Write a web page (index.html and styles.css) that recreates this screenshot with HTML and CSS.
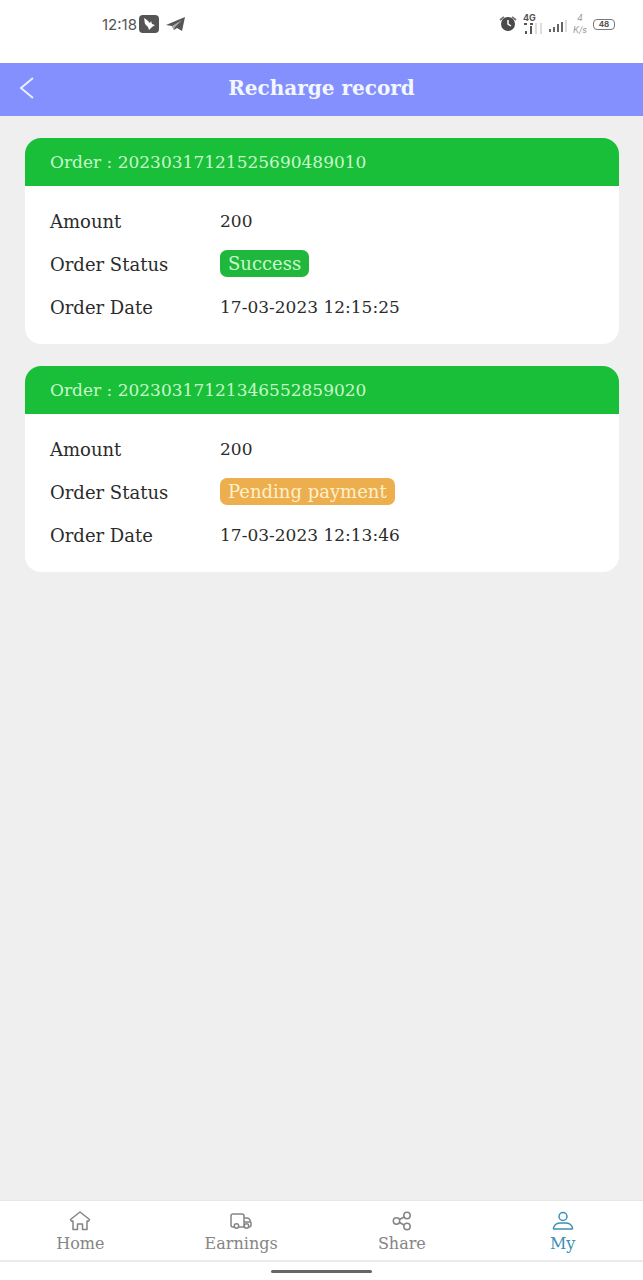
FILE: index.html
```html
<!DOCTYPE html>
<html lang="en">
<head>
    <meta charset="UTF-8">
    <meta name="viewport" content="width=device-width, initial-scale=1.0">
    <title>Recharge record</title>
    <link rel="stylesheet" href="styles.css">
</head>
<body>
    <!-- Phone status bar -->
    <div class="status-bar">
        <div class="status-left">
            <span class="clock">12:18</span>
            <svg width="20" height="18" viewBox="0 0 20 18">
                <rect width="20" height="18" rx="4" fill="#555"/>
                <path d="M5 3 L8 5 L11 8 L12 6 L13 9 L16 10 L13 12 L10 15 L9 12 L6 9 Z" fill="#fff"/>
            </svg>
            <svg width="20" height="16" viewBox="0 0 20 16">
                <path d="M0 9 L19 1 L16 15 L11 12 L8 14 L6 10 Z" fill="#555"/>
                <path d="M6 10 L16 4 L9 11 L8 14" fill="#aaa"/>
            </svg>
        </div>
        <div class="status-right">
            <svg width="18" height="16" viewBox="0 0 18 16">
                <circle cx="9" cy="8" r="7" fill="#4a4a4a"/>
                <path d="M1 4 L5 1 M17 4 L13 1" stroke="#777" stroke-width="2"/>
                <path d="M9 4 V8 L12 10" stroke="#fff" stroke-width="1.5" fill="none"/>
            </svg>
            <div class="network">
                <span>4G</span>
                <svg width="20" height="11" viewBox="0 0 20 11">
                    <path d="M1 1 H4 M7 1 H10 M3 8 V11 M8 3 V11" stroke="#555" stroke-width="2"/>
                    <path d="M13 0 V11 M18 0 V11" stroke="#ddd" stroke-width="2"/>
                </svg>
            </div>
            <svg class="signal" width="18" height="12" viewBox="0 0 18 12">
                <path d="M1 9 V12 M5 7 V12 M9 4 V12 M13 2 V12" stroke="#666" stroke-width="2"/>
                <path d="M17 0 V12" stroke="#ddd" stroke-width="2"/>
            </svg>
            <div class="speed">
                <span>4</span>
                <span>K/s</span>
            </div>
            <div class="battery">48</div>
        </div>
    </div>

    <!-- Header -->
    <header>
        <button type="button" class="back" aria-label="Back">
            <svg width="16" height="22" viewBox="0 0 16 22">
                <path d="M14 1 L2 11 L14 21" fill="none" stroke="#e6f0ff" stroke-width="2"/>
            </svg>
        </button>
        <h1>Recharge record</h1>
    </header>

    <!-- Orders -->
    <main>
        <section class="card">
            <h2>Order : 20230317121525690489010</h2>
            <dl>
                <dt>Amount</dt>
                <dd>200</dd>
                <dt>Order Status</dt>
                <dd><span class="badge success">Success</span></dd>
                <dt>Order Date</dt>
                <dd>17-03-2023 12:15:25</dd>
            </dl>
        </section>

        <section class="card">
            <h2>Order : 20230317121346552859020</h2>
            <dl>
                <dt>Amount</dt>
                <dd>200</dd>
                <dt>Order Status</dt>
                <dd><span class="badge pending">Pending payment</span></dd>
                <dt>Order Date</dt>
                <dd>17-03-2023 12:13:46</dd>
            </dl>
        </section>
    </main>

    <!-- Bottom navigation -->
    <nav>
        <a href="#home">
            <svg width="22" height="22" viewBox="0 0 22 22">
                <path d="M11 2 L1.5 9.5 L2.5 11 H4 V19.5 H8.5 V14 H13.5 V19.5 H18 V11 H19.5 L20.5 9.5 Z"/>
            </svg>
            <span>Home</span>
        </a>
        <a href="#earnings">
            <svg width="22" height="22" viewBox="0 0 22 22">
                <path d="M4 17 H3 Q1 17 1 15 V6 Q1 4 3 4 H12 Q14 4 14 6 V17 H9 M14 8 H17 Q19 8 20 10 L21 13 V15 Q21 17 19 17 M14 12 H20"/>
                <circle cx="6.5" cy="16" r="2.2"/>
                <circle cx="16.5" cy="16" r="2.2"/>
            </svg>
            <span>Earnings</span>
        </a>
        <a href="#share">
            <svg width="22" height="22" viewBox="0 0 22 22">
                <circle cx="5.5" cy="11" r="3.2"/>
                <circle cx="16" cy="5.5" r="3.2"/>
                <circle cx="16" cy="16.5" r="3.2"/>
                <path d="M8.5 9.5 L13 7 M8.5 12.5 L13 15"/>
            </svg>
            <span>Share</span>
        </a>
        <a href="#my" class="active">
            <svg width="22" height="22" viewBox="0 0 22 22">
                <circle cx="11" cy="6.5" r="4"/>
                <path d="M2 19 Q1 19 2 16.5 Q4 13 8 13 H14 Q18 13 20 16.5 Q21 19 20 19 Z"/>
            </svg>
            <span>My</span>
        </a>
    </nav>
    <div class="home-indicator"></div>
</body>
</html>
```

FILE: styles.css
```css
* {
    box-sizing: border-box;
}

body {
    font-family: "DejaVu Serif", serif;
    font-size: 17px;
    margin: 0;
    min-height: 100vh;
    display: flex;
    flex-direction: column;
    background-color: #efefef;
    color: #2b2b2b;
}

/* Status bar */
.status-bar {
    display: flex;
    justify-content: space-between;
    height: 63px;
    padding: 8px 28px 0 102px;
    background-color: #fff;
    font-family: Inter, sans-serif;
    color: #555;
}

.status-left,
.status-right {
    display: flex;
    align-items: center;
    height: 32px;
}

.status-left {
    gap: 2px;
}

.status-left svg + svg {
    margin-left: 5px;
}

.clock {
    font-size: 15px;
}

.status-right {
    gap: 6px;
}

.network,
.speed {
    display: flex;
    flex-direction: column;
    font-size: 9px;
    line-height: 8px;
}

.network {
    gap: 1px;
    font-weight: bold;
}

.signal {
    margin-top: 4px;
}

.speed {
    align-items: center;
    gap: 4px;
    font-style: italic;
    color: #999;
}

.battery {
    width: 22px;
    height: 11px;
    border: 1px solid #777;
    border-radius: 4px;
    font-size: 8px;
    font-weight: bold;
    line-height: 9px;
    text-align: center;
}

/* Header */
header {
    display: grid;
    grid-template-columns: 54px 1fr 54px;
    align-items: center;
    height: 53px;
    padding-bottom: 4px;
    background-color: #8490fd;
    color: #f3f7ff;
}

header h1 {
    margin: 0;
    font-size: 20px;
    line-height: 24px;
    text-align: center;
}

.back {
    display: flex;
    justify-content: center;
    padding: 0;
    border: none;
    background: none;
    cursor: pointer;
}

/* Orders */
main {
    flex: 1;
    display: flex;
    flex-direction: column;
    gap: 22px;
    padding: 22px 24px 22px 25px;
}

.card {
    background-color: #fff;
    border-radius: 16px;
    overflow: hidden;
}

.card h2 {
    margin: 0;
    padding: 0 25px;
    background-color: #19bf38;
    color: #c8f8cb;
    font-size: 17px;
    font-weight: normal;
    line-height: 48px;
}

.card dl {
    display: grid;
    grid-template-columns: 170px 1fr;
    margin: 0;
    padding: 14px 25px 15px;
    line-height: 43px;
}

.card dt {
    font-size: 18px;
}

.card dd {
    margin: 0;
}

.badge {
    display: inline-block;
    padding: 0 8px;
    border-radius: 7px;
    font-size: 18px;
    line-height: 27px;
}

.success {
    background-color: #20b83c;
    color: #c8f8cb;
}

.pending {
    background-color: #edae4e;
    color: #fff0cc;
}

/* Bottom navigation */
nav {
    display: flex;
    height: 62px;
    padding-top: 9px;
    background-color: #fff;
    border-top: 1px solid #e6e6e6;
    border-bottom: 2px solid #ebebeb;
}

nav a {
    flex: 1;
    display: flex;
    flex-direction: column;
    align-items: center;
    gap: 2px;
    color: #858585;
    font-size: 16px;
    line-height: 20px;
    text-decoration: none;
}

nav svg {
    fill: none;
    stroke: currentColor;
    stroke-width: 1.5;
    stroke-linejoin: round;
}

nav .active {
    color: #3c8fb5;
}

.home-indicator {
    display: flex;
    justify-content: center;
    height: 18px;
    padding-top: 8px;
    background-color: #fff;
}

.home-indicator::before {
    content: "";
    width: 101px;
    height: 3px;
    border-radius: 2px;
    background-color: #666;
}
```
